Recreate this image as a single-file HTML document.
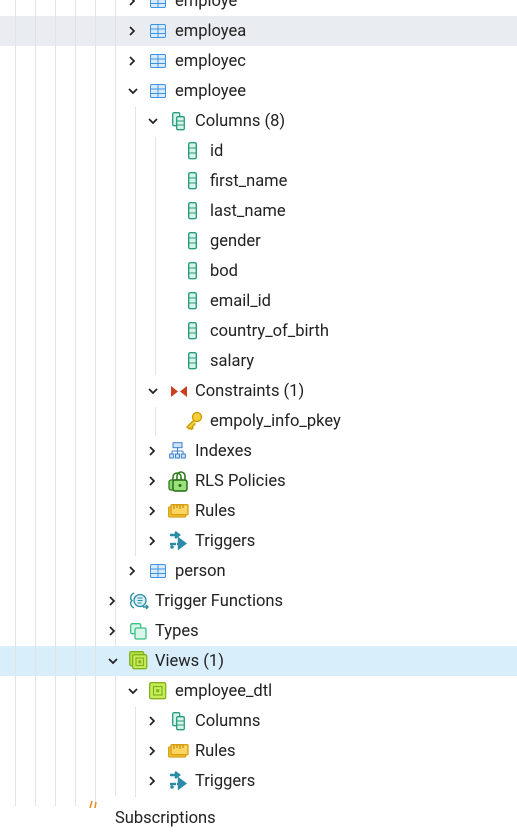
<!DOCTYPE html>
<html><head><meta charset="utf-8"><style>
body{margin:0;width:517px;height:806px;overflow:hidden;background:#fff;position:relative;font-family:Roboto,"Liberation Sans","DejaVu Sans",sans-serif;font-size:16.5px;color:#222}
.hl{position:absolute;left:0;width:517px;height:30px}
.v{position:absolute;width:1px;background:#e3e3e3}
.r{position:absolute;height:30px;line-height:30px;white-space:nowrap;margin-top:1px}
svg{position:absolute}
</style></head><body>
<div class="hl" style="top:16px;background:#e9ecf0"></div>
<div class="hl" style="top:646px;background:#d8eefa"></div>

<div class="v" style="left:15px;top:0;height:806px"></div>
<div class="v" style="left:35px;top:0;height:806px"></div>
<div class="v" style="left:55px;top:0;height:806px"></div>
<div class="v" style="left:75px;top:0;height:806px"></div>
<div class="v" style="left:95px;top:0;height:806px"></div>
<div class="v" style="left:115px;top:0;height:646px"></div>
<div class="v" style="left:115px;top:676px;height:120px"></div>
<div class="v" style="left:135px;top:107px;height:449px"></div>
<div class="v" style="left:155px;top:137px;height:238px"></div>
<div class="v" style="left:155px;top:407px;height:29px"></div>
<div class="v" style="left:135px;top:707px;height:90px"></div>

<svg width="0" height="0"><defs>
<g id="cr"><polyline points="1,1 5,5 1,9" fill="none" stroke="#222" stroke-width="1.7"/></g>
<g id="cd"><polyline points="1,1 5,5 9,1" fill="none" stroke="#222" stroke-width="1.7"/></g>
<g id="tb"><rect x="0.5" y="0.5" width="15" height="13" rx="1.5" fill="#dbeafa" stroke="#3b95e0"/><line x1="0.5" y1="5" x2="15.5" y2="5" stroke="#3b95e0"/><line x1="0.5" y1="9.5" x2="15.5" y2="9.5" stroke="#3b95e0"/><line x1="8" y1="0.5" x2="8" y2="13.5" stroke="#3b95e0"/></g>
<g id="col"><rect x="0.7" y="0.7" width="7.6" height="16" rx="1.5" fill="#d8f3ea" stroke="#2a9c7e" stroke-width="1.4"/><line x1="1" y1="6" x2="8" y2="6" stroke="#2a9c7e"/><line x1="1" y1="11" x2="8" y2="11" stroke="#2a9c7e"/></g>
<g id="cols"><rect x="0.7" y="0.7" width="7" height="13" rx="1.3" fill="#d8f3ea" stroke="#2a9c7e" stroke-width="1.3"/><rect x="4.7" y="4.7" width="7.6" height="13" rx="1.3" fill="#d8f3ea" stroke="#2a9c7e" stroke-width="1.3"/><line x1="5" y1="9" x2="12" y2="9" stroke="#2a9c7e"/><line x1="5" y1="13" x2="12" y2="13" stroke="#2a9c7e"/></g>
<g id="rul"><rect x="0.7" y="3" width="17" height="10" rx="1" fill="#f5c842" stroke="#d89e10" stroke-width="1.3"/><rect x="3" y="0.7" width="17" height="10" rx="1" fill="#fbd560" stroke="#d89e10" stroke-width="1.3"/><path d="M6 1v4M9 1v3M12 1v4M15 1v3" stroke="#b57f00"/></g>
<g id="trg"><path d="M1 4h8M6 1l4 3-4 3M8 13h5M10 8l6 4.5-6 4.5z" stroke="#2a8da5" stroke-width="2.4" fill="#2a8da5"/><path d="M1 13h6" stroke="#2a8da5" stroke-width="2.4"/><circle cx="3" cy="16" r="1.8" fill="#2a8da5"/></g>
</defs></svg>

<svg style="left:129px;top:-4px" width="10" height="10"><use href="#cr"/></svg>
<svg style="left:150px;top:-6px" width="17" height="15"><use href="#tb"/></svg>
<div class="r" style="left:175px;top:-14px">employe</div>

<svg style="left:129px;top:26px" width="10" height="10"><use href="#cr"/></svg>
<svg style="left:150px;top:24px" width="17" height="15"><use href="#tb"/></svg>
<div class="r" style="left:175px;top:16px">employea</div>

<svg style="left:129px;top:56px" width="10" height="10"><use href="#cr"/></svg>
<svg style="left:150px;top:54px" width="17" height="15"><use href="#tb"/></svg>
<div class="r" style="left:175px;top:46px">employec</div>

<svg style="left:128px;top:88px" width="10" height="10"><use href="#cd"/></svg>
<svg style="left:150px;top:84px" width="17" height="15"><use href="#tb"/></svg>
<div class="r" style="left:175px;top:76px">employee</div>

<svg style="left:148px;top:118px" width="10" height="10"><use href="#cd"/></svg>
<svg style="left:172px;top:112px" width="14" height="19"><use href="#cols"/></svg>
<div class="r" style="left:195px;top:106px">Columns (8)</div>

<svg style="left:188px;top:142px" width="10" height="18"><use href="#col"/></svg><div class="r" style="left:210px;top:136px">id</div>
<svg style="left:188px;top:172px" width="10" height="18"><use href="#col"/></svg><div class="r" style="left:210px;top:166px">first_name</div>
<svg style="left:188px;top:202px" width="10" height="18"><use href="#col"/></svg><div class="r" style="left:210px;top:196px">last_name</div>
<svg style="left:188px;top:232px" width="10" height="18"><use href="#col"/></svg><div class="r" style="left:210px;top:226px">gender</div>
<svg style="left:188px;top:262px" width="10" height="18"><use href="#col"/></svg><div class="r" style="left:210px;top:256px">bod</div>
<svg style="left:188px;top:292px" width="10" height="18"><use href="#col"/></svg><div class="r" style="left:210px;top:286px">email_id</div>
<svg style="left:188px;top:322px" width="10" height="18"><use href="#col"/></svg><div class="r" style="left:210px;top:316px">country_of_birth</div>
<svg style="left:188px;top:352px" width="10" height="18"><use href="#col"/></svg><div class="r" style="left:210px;top:346px">salary</div>

<svg style="left:148px;top:388px" width="10" height="10"><use href="#cd"/></svg>
<svg style="left:170px;top:385px" width="18" height="13"><path d="M1 1l7 5.5-7 5.5zM17 1l-7 5.5 7 5.5z" fill="#c9401c"/></svg>
<div class="r" style="left:195px;top:376px">Constraints (1)</div>

<svg style="left:185px;top:411px" width="18" height="20"><circle cx="12" cy="6" r="4.5" fill="#f5cf3a" stroke="#c99a00" stroke-width="1.3"/><path d="M9 9l-7 7 2 2 1-1 1.5 1.5 1.5-1.5-1-1 3.5-3.5" fill="#f5cf3a" stroke="#c99a00" stroke-width="1.3"/></svg>
<div class="r" style="left:210px;top:406px">empoly_info_pkey</div>

<svg style="left:149px;top:446px" width="10" height="10"><use href="#cr"/></svg>
<svg style="left:169px;top:442px" width="18" height="18"><rect x="4" y="0.7" width="9" height="5" fill="#cfe3f8" stroke="#3a7fd0"/><path d="M8.5 6v3M3 9h11M3 9v3M8.5 9v3M14 9v3" stroke="#3a7fd0" fill="none"/><rect x="0.7" y="12" width="4" height="4" fill="#cfe3f8" stroke="#3a7fd0"/><rect x="6.5" y="12" width="4" height="4" fill="#cfe3f8" stroke="#3a7fd0"/><rect x="12.3" y="12" width="4" height="4" fill="#cfe3f8" stroke="#3a7fd0"/></svg>
<div class="r" style="left:195px;top:436px">Indexes</div>

<svg style="left:149px;top:476px" width="10" height="10"><use href="#cr"/></svg>
<svg style="left:168px;top:471px" width="21" height="21"><path d="M5 9V6a4 4 0 0 1 8 0v3" fill="none" stroke="#2b7a1c" stroke-width="1.6"/><rect x="1" y="9" width="12" height="10" rx="2" fill="#8ed86e" stroke="#2b7a1c" stroke-width="1.3"/><path d="M9 9V5a4 4 0 0 1 8 0v4" fill="none" stroke="#2b7a1c" stroke-width="1.6"/><rect x="5" y="9" width="14" height="11" rx="2" fill="#9be07a" stroke="#1f6a14" stroke-width="1.4"/><circle cx="12" cy="14.5" r="1.5" fill="#1f6a14"/></svg>
<div class="r" style="left:195px;top:466px">RLS Policies</div>

<svg style="left:149px;top:506px" width="10" height="10"><use href="#cr"/></svg>
<svg style="left:168px;top:504px" width="21" height="15"><use href="#rul"/></svg>
<div class="r" style="left:195px;top:496px">Rules</div>

<svg style="left:149px;top:536px" width="10" height="10"><use href="#cr"/></svg>
<svg style="left:169px;top:531px" width="19" height="19"><use href="#trg"/></svg>
<div class="r" style="left:195px;top:526px">Triggers</div>

<svg style="left:129px;top:566px" width="10" height="10"><use href="#cr"/></svg>
<svg style="left:150px;top:564px" width="17" height="15"><use href="#tb"/></svg>
<div class="r" style="left:175px;top:556px">person</div>

<svg style="left:109px;top:596px" width="10" height="10"><use href="#cr"/></svg>
<svg style="left:129px;top:591px" width="20" height="20"><path d="M5 2C1 4 1 8 3 9.5 1 11 1 15 5 17" fill="none" stroke="#2a8da5" stroke-width="1.4"/><circle cx="11" cy="9.5" r="6" fill="#d8f0f5" stroke="#2a8da5" stroke-width="1.3"/><path d="M8.5 7h5M8.5 9.5h5M8.5 12h4" stroke="#2a8da5"/><path d="M14 16h5M17 14l2 2-2 2" stroke="#2a8da5" stroke-width="1.5" fill="none"/></svg>
<div class="r" style="left:155px;top:586px">Trigger Functions</div>

<svg style="left:109px;top:626px" width="10" height="10"><use href="#cr"/></svg>
<svg style="left:130px;top:623px" width="17" height="17"><rect x="0.7" y="0.7" width="10" height="10" rx="1.5" fill="#d8f7e8" stroke="#3bbf86" stroke-width="1.3"/><rect x="5" y="5" width="11" height="11" rx="1.5" fill="#d8f7e8" stroke="#3bbf86" stroke-width="1.3"/></svg>
<div class="r" style="left:155px;top:616px">Types</div>

<svg style="left:108px;top:658px" width="10" height="10"><use href="#cd"/></svg>
<svg style="left:129px;top:651px" width="19" height="19"><rect x="0.7" y="0.7" width="14" height="14" rx="1.5" fill="#b7e04a" stroke="#7fb21c" stroke-width="1.3"/><rect x="3.7" y="3.7" width="14" height="14" rx="1.5" fill="#c8ec5a" stroke="#7fb21c" stroke-width="1.3"/><rect x="7" y="7" width="7.5" height="7.5" fill="none" stroke="#7fb21c" stroke-width="1.2"/><rect x="9.3" y="9.3" width="3" height="3" fill="#7fb21c"/></svg>
<div class="r" style="left:155px;top:646px">Views (1)</div>

<svg style="left:128px;top:688px" width="10" height="10"><use href="#cd"/></svg>
<svg style="left:149px;top:682px" width="18" height="18"><rect x="0.7" y="0.7" width="16" height="16" rx="1.5" fill="#c8ec5a" stroke="#7fb21c" stroke-width="1.3"/><rect x="4.5" y="4.5" width="8.5" height="8.5" fill="none" stroke="#7fb21c" stroke-width="1.2"/><rect x="7.2" y="7.2" width="3" height="3" fill="#7fb21c"/></svg>
<div class="r" style="left:175px;top:676px">employee_dtl</div>

<svg style="left:149px;top:716px" width="10" height="10"><use href="#cr"/></svg>
<svg style="left:172px;top:712px" width="14" height="19"><use href="#cols"/></svg>
<div class="r" style="left:195px;top:706px">Columns</div>

<svg style="left:149px;top:746px" width="10" height="10"><use href="#cr"/></svg>
<svg style="left:168px;top:744px" width="21" height="15"><use href="#rul"/></svg>
<div class="r" style="left:195px;top:736px">Rules</div>

<svg style="left:149px;top:776px" width="10" height="10"><use href="#cr"/></svg>
<svg style="left:169px;top:771px" width="19" height="19"><use href="#trg"/></svg>
<div class="r" style="left:195px;top:766px">Triggers</div>

<svg style="left:86px;top:800px" width="16" height="8"><path d="M4 8l2-7M9 8l1-6" stroke="#e8891a" stroke-width="1.5"/></svg>
<div class="r" style="left:115px;top:803px">Subscriptions</div>
</body></html>
